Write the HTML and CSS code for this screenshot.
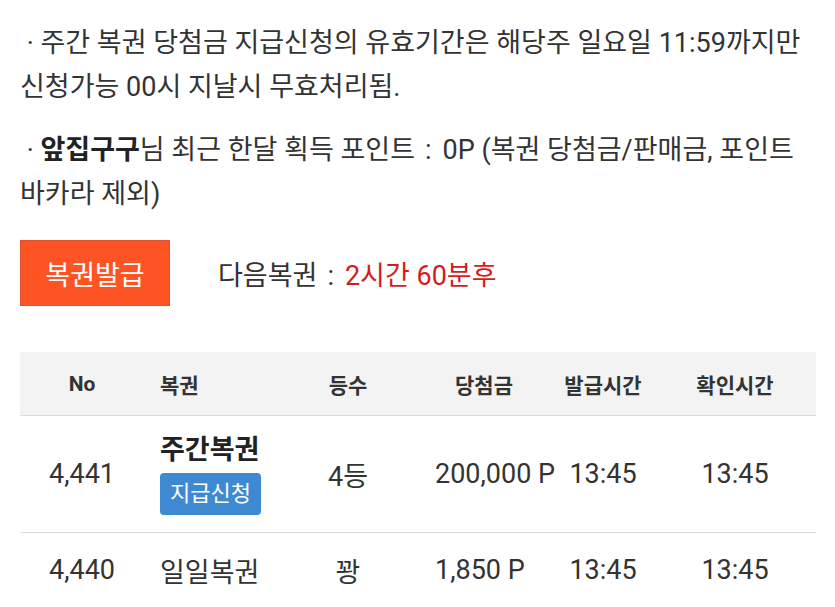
FILE: index.html
```html
<!DOCTYPE html>
<html lang="ko">
<head>
<meta charset="utf-8">
<title>복권</title>
<link rel="stylesheet" href="styles.css">
</head>
<body>
<div class="page">
  <p class="note">&nbsp;· 주간 복권 당첨금 지급신청의 유효기간은 해당주 일요일 11:59까지만 신청가능 00시 지날시 무효처리됨.</p>
  <p class="note">&nbsp;· <strong>앞집구구</strong>님 최근 한달 획득 포인트<span class="colon">:</span>0P (복권 당첨금/판매금, 포인트 바카라 제외)</p>
  <div class="issue">
    <button class="issue-btn" type="button">복권발급</button>
    <span class="next">다음복권<span class="colon">:</span><span class="next-time">2시간 60분후</span></span>
  </div>
  <table class="lotto">
    <colgroup>
      <col class="c-no"><col class="c-name"><col class="c-rank"><col class="c-prize"><col class="c-issue"><col class="c-check">
    </colgroup>
    <thead>
      <tr>
        <th>No</th>
        <th class="left">복권</th>
        <th>등수</th>
        <th class="prize-h">당첨금</th>
        <th>발급시간</th>
        <th class="check">확인시간</th>
      </tr>
    </thead>
    <tbody>
      <tr class="row-tall">
        <td>4,441</td>
        <td class="left">
          <div class="name-bold">주간복권</div>
          <span class="claim">지급신청</span>
        </td>
        <td>4등</td>
        <td class="prize">200,000 P</td>
        <td>13:45</td>
        <td class="check">13:45</td>
      </tr>
      <tr class="row-short">
        <td>4,440</td>
        <td class="left">일일복권</td>
        <td>꽝</td>
        <td class="prize">1,850 P</td>
        <td>13:45</td>
        <td class="check">13:45</td>
      </tr>
    </tbody>
  </table>
</div>
</body>
</html>
```

FILE: styles.css
```css
html, body {
  margin: 0;
  padding: 0;
  background: #ffffff;
}

body {
  font-family: Roboto, "Noto Sans CJK KR", sans-serif;
  color: #333333;
}

.page {
  padding: 21px 19px 0 20px;
}

.note {
  margin: 0;
  font-size: 27px;
  line-height: 44px;
  word-break: keep-all;
}

.note + .note {
  margin-top: 19px;
}

.note strong {
  font-weight: 700;
  color: #222222;
}

.colon {
  display: inline-block;
  padding: 0 11px 0 10px;
}

.issue {
  margin-top: 24px;
  display: flex;
  align-items: center;
  gap: 48px;
}

.issue-btn {
  width: 150px;
  height: 66px;
  background: #fe5424;
  border: 1px solid #d9542f;
  color: #ffffff;
  font-family: Roboto, "Noto Sans CJK KR", sans-serif;
  font-size: 27px;
  padding: 0;
  margin: 0;
}

.next {
  font-size: 27px;
}

.next-time {
  color: #d41c1c;
}

.lotto {
  margin-top: 46px;
  width: 796px;
  border-collapse: collapse;
  table-layout: fixed;
}

.c-no { width: 124px; }
.c-name { width: 156px; }
.c-rank { width: 96px; }
.c-prize { width: 164px; }
.c-issue { width: 86px; }
.c-check { width: 170px; }

.lotto th {
  height: 63px;
  padding: 0;
  background: #f3f3f3;
  border-bottom: 1px solid #dddddd;
  font-size: 21px;
  font-weight: 700;
  color: #333333;
  text-align: center;
  white-space: nowrap;
}

.lotto td {
  padding: 0;
  font-size: 27px;
  text-align: center;
  vertical-align: middle;
  white-space: nowrap;
}

.row-tall td {
  height: 116px;
  border-bottom: 1px solid #dddddd;
}

.row-short td {
  height: 74px;
}

.lotto th.left,
.lotto td.left {
  text-align: left;
  padding-left: 16px;
}

.lotto th.prize-h {
  padding-left: 12px;
}

.lotto td.prize {
  text-align: left;
  padding-left: 39px;
}

.lotto th.check,
.lotto td.check {
  padding-left: 8px;
}

.name-bold {
  font-weight: 700;
  font-size: 27px;
  line-height: 32px;
  color: #222222;
  margin-bottom: 7px;
}

.claim {
  display: inline-block;
  width: 101px;
  height: 42px;
  line-height: 42px;
  text-align: center;
  background: #3d8ad3;
  border-radius: 4px;
  color: #ffffff;
  font-size: 22px;
}
```
